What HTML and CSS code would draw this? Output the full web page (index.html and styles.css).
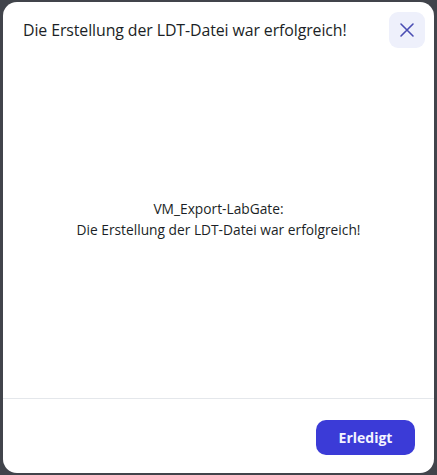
FILE: index.html
```html
<!DOCTYPE html>
<html lang="de">
<head>
<meta charset="utf-8">
<link rel="stylesheet" href="styles.css">
</head>
<body>
<div class="backdrop">
  <div class="modal">
    <div class="modal-header">
      <h2 class="modal-title">Die Erstellung der LDT-Datei war erfolgreich!</h2>
      <button class="close-btn" aria-label="Schließen">
        <svg width="16" height="16" viewBox="0 0 16 16" fill="none" stroke="#4a4db3" stroke-width="1.6" stroke-linecap="round"><path d="M2 2 L14 14 M14 2 L2 14"/></svg>
      </button>
    </div>
    <div class="modal-body">
      <p class="message">VM_Export-LabGate:<br>Die Erstellung der LDT-Datei war erfolgreich!</p>
    </div>
    <div class="modal-footer">
      <button class="primary-btn">Erledigt</button>
    </div>
  </div>
</div>
</body>
</html>
```
FILE: styles.css
```css
html, body {
  margin: 0;
  padding: 0;
  height: 100%;
}
body {
  background: #41444b;
  font-family: "Open Sans", "Noto Sans", sans-serif;
  color: #1b1f26;
}
.backdrop {
  height: 100%;
  box-sizing: border-box;
  padding: 2px 3px 2px 3px;
  display: flex;
}
.modal {
  flex: 1;
  background: #ffffff;
  border-radius: 14px;
  display: flex;
  flex-direction: column;
  overflow: hidden;
}
.modal-header {
  display: flex;
  align-items: center;
  justify-content: space-between;
  padding: 10px 9px 0 20px;
  height: 36px;
}
.modal-title {
  margin: 0;
  font-size: 15.9px;
  font-weight: 500;
  letter-spacing: -0.1px;
}
.close-btn {
  width: 36px;
  height: 36px;
  border: none;
  border-radius: 9px;
  background: #eef0fb;
  display: flex;
  align-items: center;
  justify-content: center;
  padding: 0;
}
.modal-body {
  flex: 1;
  display: flex;
  align-items: center;
  justify-content: center;
  padding-bottom: 8px;
}
.message {
  margin: 0;
  text-align: center;
  font-size: 13.75px;
  font-weight: 500;
  line-height: 21px;
}
.modal-footer {
  border-top: 1px solid #e4e7eb;
  height: 74px;
  display: flex;
  align-items: center;
  justify-content: flex-end;
  padding: 0 19px;
}
.primary-btn {
  width: 99px;
  height: 35px;
  border: none;
  border-radius: 10px;
  background: #3b3bd7;
  color: #f4f4ff;
  font-family: "Open Sans", "Noto Sans", sans-serif;
  font-size: 14px;
  font-weight: 700;
  margin-top: 2px;
}
```
